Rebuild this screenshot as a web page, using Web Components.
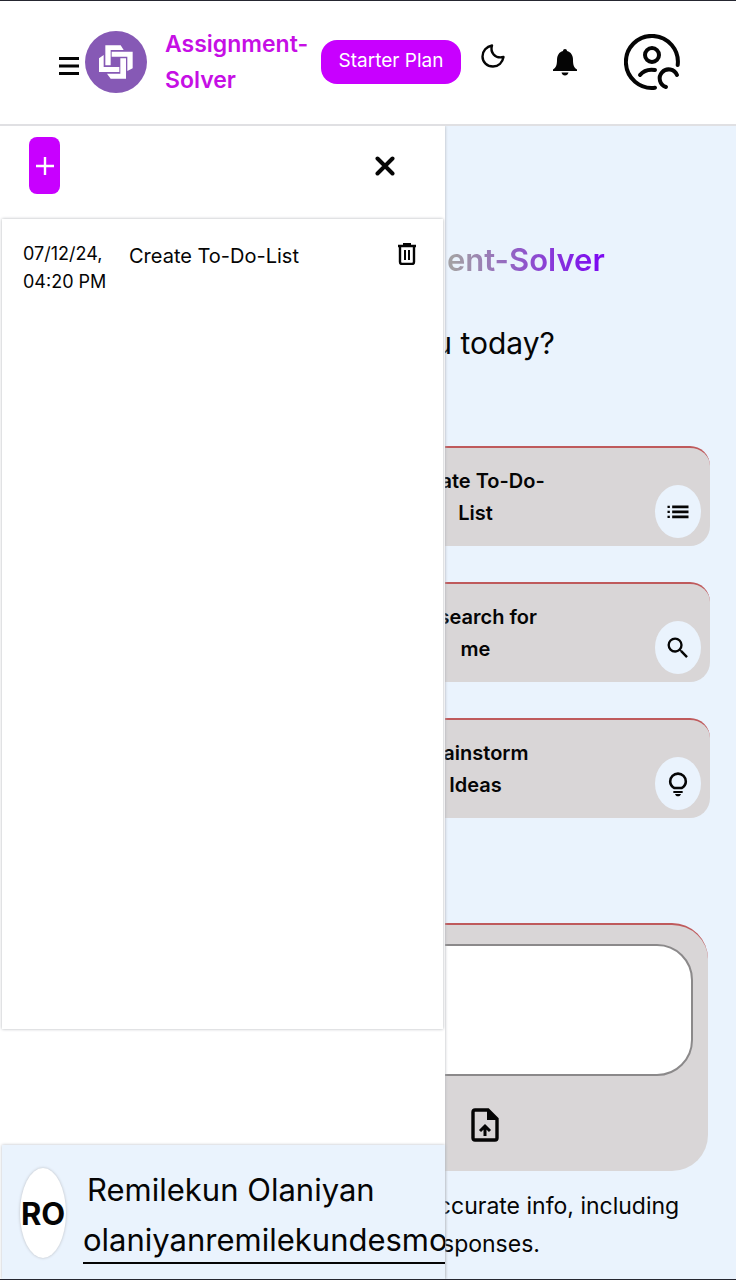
<!DOCTYPE html>
<html lang="en">
<head>
<meta charset="utf-8">
<meta name="viewport" content="width=device-width, initial-scale=1">
<title>Assignment-Solver</title>
<style>
  body {
    margin: 0;
    color: #050505;
    font-family: Inter, "Open Sans", sans-serif;
    --solver-accent: #c800ff;
    --solver-surface: #eaf3fd;
    --solver-card: #d9d6d7;
    --solver-edge: #bf5a5c;
  }
</style>
</head>
<body>
<solver-app></solver-app>

<script>
const icons = {
  menu: '<svg width="20" height="26" viewBox="0 0 20 26" aria-hidden="true"><path d="M0 9.500h20M0 17h20M0 24.500h20" fill="none" stroke="currentColor" stroke-width="2.800"/></svg>',
  logo: '<svg width="62" height="62" viewBox="0 0 186 186" aria-hidden="true"><circle cx="93" cy="93" r="93" fill="#8659b5"/><path fill="#fff" d="M61 43h46l9 14H77v46H61zM80 62h63v50l-16 8V77H80zM106 82h17v61H77l-11-15h40zM42 82l14-10v36h47v15H42z"/></svg>',
  moon: '<svg width="24" height="24" viewBox="0 0 24 24" aria-hidden="true"><path d="M11 1.500C9 8 13.500 15 22.500 13 21.500 18.500 17.500 22.500 12 22.500 6 22.500 1.500 18 1.500 12.500 1.500 7 5.500 2.500 11 1.500z" fill="none" stroke="currentColor" stroke-width="2.400" stroke-linejoin="round"/></svg>',
  bell: '<svg width="24" height="28" viewBox="0 0 24 28" aria-hidden="true"><path fill="currentColor" d="M12 1c1.200 0 2 .8 2 2 4 1 6 4.500 6 9 0 5 1 7.500 4 9.500V23H0v-1.500C3 19.500 4 17 4 12c0-4.500 2-8 6-9 0-1.200.8-2 2-2zM8.500 24.500h7C15 26.500 13.800 27.500 12 27.500s-3-1-3.500-3z"/></svg>',
  profile: '<svg width="56" height="56" viewBox="0 0 56 56" aria-hidden="true"><g fill="none" stroke="currentColor" stroke-width="4" stroke-linecap="round"><path d="M53.700 31A26 26 0 1 0 31 53.700"/><circle cx="28" cy="21" r="7"/><path d="M16 41C20 36 25 35 31 36"/><path d="M53 41A9 9 0 1 0 42 53"/></g></svg>',
  plus: '<svg width="20" height="20" viewBox="0 0 20 20" aria-hidden="true"><path d="M10 1v18M1 10h18" stroke="currentColor" stroke-width="2.400"/></svg>',
  close: '<svg width="20" height="20" viewBox="0 0 20 20" aria-hidden="true"><path d="M2.500 2.500l15 15M17.500 2.500l-15 15" stroke="currentColor" stroke-width="4" stroke-linecap="round"/></svg>',
  trash: '<svg width="20" height="22" viewBox="0 0 20 22" aria-hidden="true"><path d="M1 3h18M3 4v15q0 2 2 2h10q2 0 2-2V4" fill="none" stroke="currentColor" stroke-width="2.400"/><path d="M6 0h8v3H6z" fill="currentColor"/><path d="M8 7v10M12 7v10" stroke="currentColor" stroke-width="2"/></svg>',
  list: '<svg width="28" height="28" viewBox="0 0 24 24" aria-hidden="true"><path fill="currentColor" d="M3 6.600h2v2H3zM3 10.900h2v2H3zM3 15.200h2v2H3zM7 6.500h14v2.200H7zM7 10.800h14V13H7zM7 15.100h14v2.200H7z"/></svg>',
  search: '<svg width="28" height="28" viewBox="0 0 24 24" aria-hidden="true"><path fill="currentColor" d="M15.500 14h-.79l-.28-.27A6.470 6.470 0 0 0 16 9.500 6.500 6.500 0 1 0 9.500 16c1.610 0 3.090-.59 4.230-1.570l.27.28v.79l5 4.990L20.490 19zm-6 0a4.500 4.500 0 1 1 0-9 4.500 4.500 0 0 1 0 9z"/></svg>',
  bulb: '<svg width="28" height="28" viewBox="0 0 24 24" aria-hidden="true"><path d="M9 15.500c-2.400-1.400-3.700-3.200-3.700-5.700a6.700 6.700 0 0 1 13.400 0c0 2.500-1.300 4.300-3.700 5.700z" fill="none" stroke="currentColor" stroke-width="2.200"/><path fill="currentColor" d="M8 18h8v1.700H8zM9.500 20.500h5c-.3 1.300-1.200 2-2.500 2s-2.200-.7-2.500-2z"/></svg>',
  upload: '<svg width="28" height="34" viewBox="0 0 28 34" aria-hidden="true"><path d="M4 2h13l9 9v19q0 2-2 2H4q-2 0-2-2V4q0-2 2-2z" fill="none" stroke="currentColor" stroke-width="3.400"/><path d="M16 2l10 10H16z" fill="currentColor"/><path d="M14 28v-9M9 23l5-5 5 5" fill="none" stroke="currentColor" stroke-width="3"/></svg>'
};

class SolverElement extends HTMLElement {
  constructor() {
    super();
    const template = document.createElement('template');
    template.innerHTML = `
      <style>
        * {
          box-sizing: border-box;
        }

        svg {
          display: block;
          flex: none;
        }

        button {
          align-items: center;
          background: none;
          border: 0;
          color: inherit;
          cursor: pointer;
          display: flex;
          font: inherit;
          justify-content: center;
          padding: 0;
        }
      </style>
      ${this.constructor.template}
    `;
    this.root = this.attachShadow({ mode: 'open' });
    this.root.appendChild(template.content.cloneNode(true));
  }
}

class SolverHeader extends SolverElement {
  static get template() {
    return `
      <style>
        :host {
          align-items: center;
          background: #fff;
          border-bottom: 2px solid #e0e0e3;
          box-sizing: border-box;
          display: flex;
          min-height: 125px;
          padding: 0 56px 2px 59px;
        }

        .brand {
          align-items: center;
          display: flex;
          gap: 6px;
        }

        .name {
          color: #c60fe5;
          font-size: 23px;
          font-weight: 600;
          line-height: 36px;
          margin-left: 12px;
          width: 142px;
        }

        .plan {
          background: var(--solver-accent);
          border-radius: 16px;
          color: #fff;
          flex: none;
          font-size: 19px;
          height: 44px;
          margin: 0 20px 0 14px;
          padding: 0 16px 2px;
          white-space: nowrap;
          width: 140px;
        }

        .actions {
          align-items: center;
          display: flex;
          flex: 1;
          justify-content: space-between;
        }

        .theme {
          padding-bottom: 12px;
        }
      </style>
      <div class="brand">
        <button aria-label="Menu">${icons.menu}</button>
        ${icons.logo}
        <div class="name">Assignment-Solver</div>
      </div>
      <button class="plan">Starter Plan</button>
      <div class="actions">
        <button class="theme" aria-label="Dark mode">${icons.moon}</button>
        <button aria-label="Notifications">${icons.bell}</button>
        <button aria-label="Account">${icons.profile}</button>
      </div>
    `;
  }
}
window.customElements.define('solver-header', SolverHeader);

class SolverAction extends SolverElement {
  static get template() {
    return `
      <style>
        :host {
          display: block;
        }

        button {
          background: var(--solver-card);
          border-radius: 20px;
          border-top: 2px solid var(--solver-edge);
          justify-content: flex-end;
          min-height: 100px;
          padding: 0 9px 8px;
          width: 100%;
        }

        .title {
          font-size: 20px;
          font-weight: 600;
          line-height: 32px;
          margin-right: 16%;
          padding: 17px 0 9px;
          width: 146px;
        }

        .icon {
          align-items: center;
          align-self: flex-end;
          background: var(--solver-surface);
          border-radius: 50%;
          display: flex;
          height: 53px;
          justify-content: center;
          width: 46px;
        }
      </style>
      <button>
        <span class="title"><slot></slot></span>
        <span class="icon"></span>
      </button>
    `;
  }

  connectedCallback() {
    this.root.querySelector('.icon').innerHTML = icons[this.getAttribute('icon')];
  }
}
window.customElements.define('solver-action', SolverAction);

class SolverPrompt extends SolverElement {
  static get template() {
    return `
      <style>
        :host {
          background: var(--solver-card);
          border-radius: 36px;
          border-top: 2px solid var(--solver-edge);
          box-sizing: border-box;
          display: block;
          padding: 19px 15px 29px;
        }

        textarea {
          background: #fff;
          border: 2px solid #8b898a;
          border-radius: 36px;
          display: block;
          font: inherit;
          height: 132px;
          padding: 20px;
          resize: none;
          width: 100%;
        }

        .tools {
          display: flex;
          justify-content: flex-end;
          padding: 32px 194px 0 0;
        }
      </style>
      <textarea aria-label="Message"></textarea>
      <div class="tools">
        <button aria-label="Upload file">${icons.upload}</button>
      </div>
    `;
  }
}
window.customElements.define('solver-prompt', SolverPrompt);

class SolverHome extends SolverElement {
  static get template() {
    return `
      <style>
        :host {
          background: var(--solver-surface);
          box-sizing: border-box;
          display: block;
          padding: 110px 26px 16px;
          text-align: center;
        }

        h1 {
          background: linear-gradient(90deg, #a3a0a4 68%, #7d0cf0 98%);
          background-clip: text;
          -webkit-background-clip: text;
          color: transparent;
          font-size: 31px;
          font-weight: 600;
          line-height: 48px;
          margin: 0 auto;
          width: fit-content;
        }

        .lead {
          font-size: 30px;
          line-height: 44px;
          margin: 37px 0 81px;
        }

        .actions {
          display: grid;
          gap: 36px;
        }

        solver-prompt {
          margin: 105px 2px 16px 0;
        }

        .note {
          font-size: 23px;
          line-height: 38px;
          margin: 0;
        }
      </style>
      <h1>Welcome to Assignment-Solver</h1>
      <p class="lead">How can I help you today?</p>
      <div class="actions">
        <solver-action icon="list">Create To-Do-List</solver-action>
        <solver-action icon="search">Research for me</solver-action>
        <solver-action icon="bulb">Brainstorm Ideas</solver-action>
      </div>
      <solver-prompt></solver-prompt>
      <p class="note">Assignment-Solver may display inaccurate info, including<br>about people, verify responses.</p>
    `;
  }
}
window.customElements.define('solver-home', SolverHome);

class SolverHistoryItem extends SolverElement {
  static get template() {
    return `
      <style>
        :host {
          align-items: flex-start;
          display: flex;
          gap: 20px;
        }

        .date {
          flex: none;
          font-size: 18px;
          line-height: 28px;
          width: 86px;
        }

        .title {
          flex: 1;
          font-size: 20px;
          line-height: 32px;
        }

        button {
          padding: 3px 0;
        }
      </style>
      <span class="date"><slot name="date"></slot></span>
      <span class="title"><slot></slot></span>
      <button aria-label="Delete">${icons.trash}</button>
    `;
  }
}
window.customElements.define('solver-history-item', SolverHistoryItem);

class SolverUser extends SolverElement {
  static get template() {
    return `
      <style>
        :host {
          align-items: flex-start;
          background: var(--solver-surface);
          box-shadow: 0 0 3px #b9bcc2;
          box-sizing: border-box;
          display: flex;
          gap: 17px;
          min-height: 134px;
          overflow: hidden;
          padding: 23px 0 0 18px;
        }

        .avatar {
          align-items: center;
          background: #fff;
          border-radius: 50%;
          box-shadow: 0 0 3px #b9bcc2;
          display: flex;
          flex: none;
          font-size: 31px;
          font-weight: 700;
          height: 90px;
          justify-content: center;
          width: 46px;
        }

        .details {
          flex: 1;
          font-size: 31px;
          line-height: 44px;
          min-width: 0;
          white-space: nowrap;
        }

        .name {
          margin-bottom: 6px;
          padding-left: 4px;
        }

        .email {
          border-bottom: 2px solid #050505;
        }
      </style>
      <div class="avatar"><slot name="initials"></slot></div>
      <div class="details">
        <div class="name"><slot name="name"></slot></div>
        <div class="email"><slot name="email"></slot></div>
      </div>
    `;
  }
}
window.customElements.define('solver-user', SolverUser);

class SolverSidebar extends SolverElement {
  static get template() {
    return `
      <style>
        :host {
          background: #fff;
          box-shadow: 0 0 3px #b0b3b8;
          box-sizing: border-box;
          display: flex;
          flex-direction: column;
          padding-left: 2px;
        }

        .bar {
          align-items: center;
          display: flex;
          justify-content: space-between;
          padding: 11px 50px 25px 27px;
        }

        .new {
          background: var(--solver-accent);
          border-radius: 8px;
          color: #fff;
          height: 57px;
          width: 31px;
        }

        .history {
          box-shadow: 0 0 3px #b0b3b8;
          flex: 1;
          margin: 0 2px 116px 0;
          padding: 21px 26px 21px 21px;
        }
      </style>
      <div class="bar">
        <button class="new" aria-label="New chat">${icons.plus}</button>
        <button aria-label="Close">${icons.close}</button>
      </div>
      <div class="history">
        <solver-history-item>
          <span slot="date">07/12/24, 04:20 PM</span>
          Create To-Do-List
        </solver-history-item>
      </div>
      <solver-user>
        <span slot="initials">RO</span>
        <span slot="name">Remilekun Olaniyan</span>
        <span slot="email">olaniyanremilekundesmo</span>
      </solver-user>
    `;
  }
}
window.customElements.define('solver-sidebar', SolverSidebar);

class SolverApp extends SolverElement {
  static get template() {
    return `
      <style>
        :host {
          border-bottom: 1px solid #252630;
          border-top: 1px solid #252630;
          box-sizing: border-box;
          display: flex;
          flex-direction: column;
          min-height: 100vh;
        }

        .body {
          display: grid;
          flex: 1;
          overflow: hidden;
          position: relative;
        }

        /* the drawer opens over the page */
        solver-sidebar {
          bottom: 0;
          left: 0;
          position: absolute;
          top: 0;
          width: 60.5%;
        }
      </style>
      <solver-header></solver-header>
      <div class="body">
        <solver-home></solver-home>
        <solver-sidebar></solver-sidebar>
      </div>
    `;
  }
}
window.customElements.define('solver-app', SolverApp);
</script>
</body>
</html>
